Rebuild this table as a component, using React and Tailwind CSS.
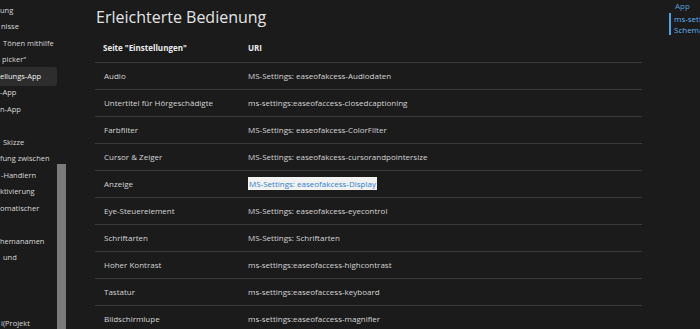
import React from "react";

const side = [
  { t: "ung", x: 0 },
  { t: "nisse", x: 1 },
  { t: "Tönen mithilfe", x: 3 },
  { t: "picker\"", x: 2 },
  { t: "ellungs-App", x: 0, sel: true },
  { t: "-App", x: 0 },
  { t: "n-App", x: 0 },
  { t: "", x: 0 },
  { t: "Skizze", x: 3 },
  { t: "fung zwischen", x: 0 },
  { t: "-Handlern", x: 1 },
  { t: "ktivierung", x: 0 },
  { t: "omatischer", x: 0 },
  { t: "", x: 0 },
  { t: "hemanamen", x: 0 },
  { t: "und", x: 3 },
  { t: "", x: 0 },
  { t: "", x: 0 },
  { t: "", x: 0 },
  { t: "i(Projekt", x: 1 },
];

const rows = [
  ["Audio", "MS-Settings: easeofakcess-Audiodaten"],
  ["Untertitel für Hörgeschädigte", "ms-settings:easeofaccess-closedcaptioning"],
  ["Farbfilter", "MS-Settings: easeofakcess-ColorFilter"],
  ["Cursor & Zeiger", "MS-Settings: easeofakcess-cursorandpointersize"],
  ["Anzeige", "MS-Settings: easeofakcess-Display", true],
  ["Eye-Steuerelement", "MS-Settings: easeofakcess-eyecontrol"],
  ["Schriftarten", "MS-Settings: Schriftarten"],
  ["Hoher Kontrast", "ms-settings:easeofaccess-highcontrast"],
  ["Tastatur", "ms-settings:easeofaccess-keyboard"],
  ["Bildschirmlupe", "ms-settings:easeofaccess-magnifier"],
];

export default function App() {
  return (
    <div
      className="w-[700px] h-[329px] overflow-hidden bg-[#1b1b1b] flex text-[#d4d4d4]"
      style={{ fontFamily: '"Open Sans", "Noto Sans", sans-serif' }}
    >
      {/* sidebar */}
      <div className="w-[66px] shrink-0 flex">
        <div className="w-[57px] overflow-hidden pt-[2px] text-[7.5px] text-[#d8d8d8]">
          {side.map((s, i) => (
            <div key={i} className="h-[16.5px] flex items-center">
              {s.sel ? (
                <div className="w-[57px] h-[19px] flex items-center bg-[#2d2d2d] rounded-r-[3px] text-[#f0f0f0] whitespace-nowrap">
                  {s.t}
                </div>
              ) : (
                <div className="whitespace-nowrap" style={{ paddingLeft: s.x }}>
                  {s.t}
                </div>
              )}
            </div>
          ))}
        </div>
        <div className="w-[9px] pt-[164px] flex flex-col">
          <div className="flex-1 bg-[#7b7b7b]" />
        </div>
      </div>

      {/* main */}
      <div className="w-[602px] shrink-0 pl-[29px] pt-[5px]">
        <h1 className="text-[16px] leading-[24px] text-[#e4e4e4] pl-[1px]">
          Erleichterte Bedienung
        </h1>
        <div className="mt-[5px] w-[547px] text-[8px]">
          <div className="h-[29px] flex items-center border-b border-[#3a3a3a] font-bold text-[#ececec]">
            <div className="w-[151px] pl-[8px]">Seite "Einstellungen"</div>
            <div className="pl-[2px]">URI</div>
          </div>
          {rows.map((r, i) => (
            <div
              key={i}
              className="h-[27px] flex items-center border-b border-[#3a3a3a]"
            >
              <div className="w-[151px] pl-[9px] whitespace-nowrap">{r[0]}</div>
              <div className="pl-[2px] whitespace-nowrap">
                {r[2] ? (
                  <span className="bg-[#f2f2f2] text-[#2f7fd0] px-[1px] py-[1px]">{r[1]}</span>
                ) : (
                  r[1]
                )}
              </div>
            </div>
          ))}
        </div>
      </div>

      {/* right */}
      <div className="flex-1 overflow-hidden pl-[1px] text-[8px]">
        <div className="h-[12px] flex items-center pl-[6px] text-[#5a9fd6] whitespace-nowrap">App</div>
        <div className="mt-[1px] border-l-2 border-[#4aa3ea] pl-[3px] text-[#62b0f0] leading-[11px] whitespace-nowrap">
          <div>ms-settings</div>
          <div>Schemas</div>
        </div>
      </div>
    </div>
  );
}
